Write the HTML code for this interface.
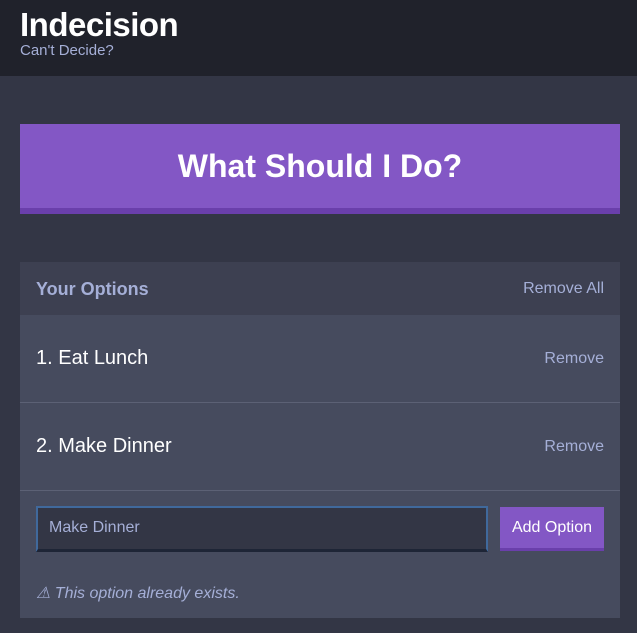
<!DOCTYPE html>
<html><head><style>
*{margin:0;padding:0;box-sizing:border-box}
body{width:637px;height:633px;background:#333645;font-family:"Liberation Sans",sans-serif;position:relative;overflow:hidden}
.hdr{position:absolute;left:0;top:0;width:637px;height:76px;background:#20222b}
.hdr h1{position:absolute;left:20px;top:6px;font-size:33px;color:#fff;font-weight:bold;letter-spacing:-0.5px}
.hdr p{position:absolute;left:20px;top:42px;font-size:15px;color:#a5afd7}
.big{position:absolute;left:20px;top:124px;width:600px;height:90px;background:#8357c5;border-bottom:6px solid #6a3fab;color:#fff;font-size:32px;font-weight:bold;text-align:center;line-height:84px}
.panel{position:absolute;left:20px;top:262px;width:600px;height:356px;background:#464b5e}
.ph{height:53px;background:#3d4051;position:relative}
.ph b{position:absolute;left:16px;top:17px;font-size:18px;color:#a5afd7}
.ph span{position:absolute;right:16px;top:18px;font-size:16px;color:#a5afd7}
.it{height:88px;border-bottom:1px solid #5c6175;position:relative}
.it b{position:absolute;left:16px;top:32px;font-size:20px;color:#fff;font-weight:normal}
.it span{position:absolute;right:16px;top:35px;font-size:16px;color:#a5afd7}
.inp{position:absolute;left:16px;top:244px;width:452px;height:46px;background:#333645;border:2px solid #40699c;border-bottom:3px solid #1e2536;color:#a5afd7;font-size:16px;padding:11px 11px}
.btn{position:absolute;left:480px;top:245px;width:104px;height:44px;background:#8357c5;border-bottom:3px solid #6a3fab;color:#fff;font-size:16px;text-align:center;line-height:42px}
.err{position:absolute;left:16px;top:321px;font-size:16px;font-style:italic;color:#a5afd7}
</style></head><body>
<div class="hdr"><h1>Indecision</h1><p>Can't Decide?</p></div>
<div class="big">What Should I Do?</div>
<div class="panel">
<div class="ph"><b>Your Options</b><span>Remove All</span></div>
<div class="it"><b>1. Eat Lunch</b><span>Remove</span></div>
<div class="it"><b>2. Make Dinner</b><span>Remove</span></div>
<div class="inp">Make Dinner</div>
<div class="btn">Add Option</div>
<div class="err">⚠ This option already exists.</div>
</div>
</body></html>
